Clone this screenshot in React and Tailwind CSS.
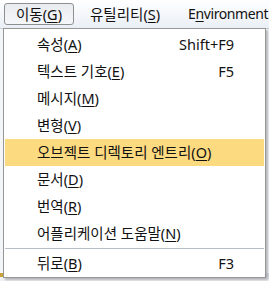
import React from "react";

const items = [
  { label: "속성", key: "A", shortcut: "Shift+F9" },
  { label: "텍스트 기호", key: "E", shortcut: "F5" },
  { label: "메시지", key: "M" },
  { label: "변형", key: "V" },
  { label: "오브젝트 디렉토리 엔트리", key: "O", active: true },
  { label: "문서", key: "D" },
  { label: "번역", key: "R" },
  { label: "어플리케이션 도움말", key: "N" },
];

const font = { fontFamily: '"Noto Sans", "Noto Sans CJK KR", sans-serif' };

const Label = ({ label, k }) => (
  <span className="whitespace-nowrap">
    {label}(<span className="underline underline-offset-2">{k}</span>)
  </span>
);

const MenuItem = ({ item }) => (
  <div
    className={`mx-[1px] h-[27px] flex items-center justify-between pl-[32px] pr-[30px] ${
      item.active ? "bg-[#fcda80]" : ""
    }`}
  >
    <Label label={item.label} k={item.key} />
    {item.shortcut && <span>{item.shortcut}</span>}
  </div>
);

export default function App() {
  return (
    <div
      className="relative w-[269px] h-[281px] overflow-hidden bg-[#eef1f5] text-[14.5px] leading-none text-[#111]"
      style={font}
    >
      {/* menu bar */}
      <div className="h-[28px] flex items-center gap-[16px] pl-[4px] bg-gradient-to-b from-[#ffffff] to-[#eaeff6] whitespace-nowrap">
        <div className="shrink-0 h-[22px] w-[70px] flex items-center justify-center rounded-[3px] border border-[#8e8f91] bg-gradient-to-b from-[#e9ebee] to-[#f6f7f9]">
          <Label label="이동" k="G" />
        </div>
        <Label label="유틸리티" k="S" />
        <span className="ml-[12px] text-[14px] tracking-[-0.4px]">
          E<span className="underline underline-offset-2">n</span>vironment
        </span>
      </div>

      {/* backdrop */}
      <div className="h-[249px] flex flex-col">
        <div className="flex-1 bg-[#f3f5f8] border-t border-[#c9d0da]" />
        <div className="h-[4px] flex">
          <div className="w-[10px] bg-[#c9a238]" />
          <div className="w-[30px] bg-[#3f6e3a]" />
          <div className="w-[40px] bg-[#d6a834]" />
          <div className="w-[60px] bg-[#e8e8e8]" />
          <div className="w-[60px] bg-[#2a4f9a]" />
          <div className="flex-1 bg-[#dfe3ea]" />
        </div>
      </div>

      {/* dropdown */}
      <div className="absolute left-[3px] top-[28px] w-[263px] border border-[#979797] bg-white pt-[2px] shadow-[2px_2px_2px_rgba(0,0,0,0.25)]">
        {items.map((item) => (
          <MenuItem key={item.key} item={item} />
        ))}
        <div className="mx-[1px] h-[3px] flex items-center">
          <div className="h-[1px] w-full bg-[#b5bec9]" />
        </div>
        <MenuItem item={{ label: "뒤로", key: "B", shortcut: "F3" }} />
      </div>
    </div>
  );
}
